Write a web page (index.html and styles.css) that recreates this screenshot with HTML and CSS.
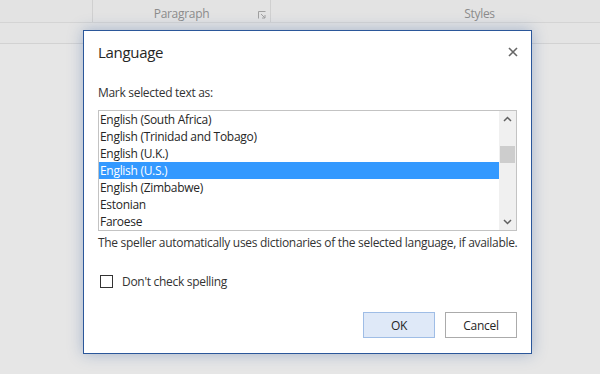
FILE: index.html
```html
<!DOCTYPE html>
<html lang="en">
<head>
    <meta charset="UTF-8">
    <title>Language</title>
    <link rel="stylesheet" href="styles.css">
</head>
<body>

<div class="ribbon">
    <div class="ribbon-group group-font"></div>
    <div class="ribbon-group group-paragraph">
        <span class="group-label">Paragraph</span>
        <svg class="launcher" width="8" height="8" viewBox="0 0 8 8">
            <path d="M0.5 7.5V0.5H7.5" fill="none" stroke="#a0a0a0" stroke-width="1"/>
            <path d="M3 3L7 7M4 7H7V4" fill="none" stroke="#a0a0a0" stroke-width="1"/>
        </svg>
    </div>
    <div class="ribbon-group group-styles">
        <span class="group-label">Styles</span>
    </div>
</div>
<div class="ruler-band"></div>

<div class="dialog">
    <div class="dialog-header">
        <span class="dialog-title">Language</span>
        <svg class="close-icon" width="10" height="10" viewBox="0 0 10 10">
            <path d="M1 1L9 9M9 1L1 9" stroke="#666" stroke-width="1.6"/>
        </svg>
    </div>

    <div class="field-label">Mark selected text as:</div>

    <div class="listbox">
        <div class="list-items">
            <div class="list-item">English (South Africa)</div>
            <div class="list-item">English (Trinidad and Tobago)</div>
            <div class="list-item">English (U.K.)</div>
            <div class="list-item selected">English (U.S.)</div>
            <div class="list-item">English (Zimbabwe)</div>
            <div class="list-item">Estonian</div>
            <div class="list-item">Faroese</div>
        </div>
        <div class="scrollbar">
            <svg class="scroll-arrow" width="17" height="17" viewBox="0 0 17 17">
                <path d="M5 10L8.5 6.5L12 10" fill="none" stroke="#606060" stroke-width="1.5"/>
            </svg>
            <div class="scroll-track">
                <div class="scroll-thumb"></div>
            </div>
            <svg class="scroll-arrow" width="17" height="17" viewBox="0 0 17 17">
                <path d="M5 7L8.5 10.5L12 7" fill="none" stroke="#606060" stroke-width="1.5"/>
            </svg>
        </div>
    </div>

    <div class="hint">The speller automatically uses dictionaries of the selected language, if available.</div>

    <label class="check-row">
        <span class="checkbox"></span>
        <span>Don't check spelling</span>
    </label>

    <div class="dialog-buttons">
        <button class="btn btn-primary">OK</button>
        <button class="btn">Cancel</button>
    </div>
</div>

</body>
</html>
```

FILE: styles.css
```css
body {
    margin: 0;
    height: 374px;
    overflow: hidden;
    background-color: #e6e6e6;
    font-family: "Open Sans", "Noto Sans", sans-serif;
    font-size: 12px;
    letter-spacing: -0.3px;
    color: #333;
}

.ribbon {
    display: flex;
    height: 22px;
    background-color: #e3e3e3;
    border-bottom: 1px solid #d4d4d4;
}

.ribbon-group {
    position: relative;
    flex-shrink: 0;
    display: flex;
    justify-content: center;
    align-items: center;
    height: 18px;
    padding-top: 4px;
    border-right: 1px solid #d0d0d0;
}

.group-font {
    width: 92px;
}

.group-paragraph {
    width: 177px;
}

.group-styles {
    flex: 1;
    padding-left: 88px;
    border-right: none;
}

.group-label {
    color: #8c8c8c;
    font-size: 12px;
}

.launcher {
    position: absolute;
    right: 4px;
    top: 11px;
}

.ruler-band {
    height: 20px;
    background-color: #e4e4e4;
    border-bottom: 1px solid #d2d2d2;
}

/* modal sits over the document */
.dialog {
    position: absolute;
    left: 83px;
    top: 30px;
    width: 449px;
    height: 324px;
    box-sizing: border-box;
    padding: 11px 14px 15px 14px;
    display: flex;
    flex-direction: column;
    background-color: #fff;
    border: 1px solid #2b579a;
    box-shadow: 0 0 14px rgba(43, 87, 154, 0.35);
}

.dialog-header {
    display: flex;
    justify-content: space-between;
    align-items: center;
    height: 20px;
}

.dialog-title {
    font-size: 15px;
    color: #262626;
}

.close-icon {
    margin-right: -1px;
}

.field-label {
    margin-top: 23px;
    line-height: 16px;
}

.listbox {
    display: flex;
    margin-top: 9px;
    height: 119px;
    border: 1px solid #c3c3c3;
}

.list-items {
    flex: 1;
}

.list-item {
    height: 17px;
    line-height: 17px;
    padding-left: 1px;
    color: #262626;
    white-space: nowrap;
}

.list-item.selected {
    background-color: #3399ff;
    color: #fff;
}

.scrollbar {
    display: flex;
    flex-direction: column;
    width: 17px;
    background-color: #f0f0f0;
}

.scroll-track {
    flex: 1;
    padding-top: 18px;
}

.scroll-thumb {
    height: 17px;
    margin: 0 1px;
    background-color: #cdcdcd;
}

.hint {
    margin-top: 4px;
    line-height: 16px;
    white-space: nowrap;
}

.check-row {
    display: flex;
    align-items: center;
    gap: 9px;
    margin-top: 22px;
    height: 16px;
    padding-left: 2px;
}

.checkbox {
    width: 11px;
    height: 11px;
    border: 1px solid #333;
    background-color: #fff;
}

.dialog-buttons {
    display: flex;
    justify-content: flex-end;
    gap: 10px;
    margin-top: auto;
}

.btn {
    width: 72px;
    height: 26px;
    font-family: inherit;
    font-size: 12px;
    letter-spacing: inherit;
    color: #262626;
    background-color: #fff;
    border: 1px solid #ababab;
}

.btn-primary {
    background-color: #dfe9f8;
    border-color: #9fbde6;
}
```
